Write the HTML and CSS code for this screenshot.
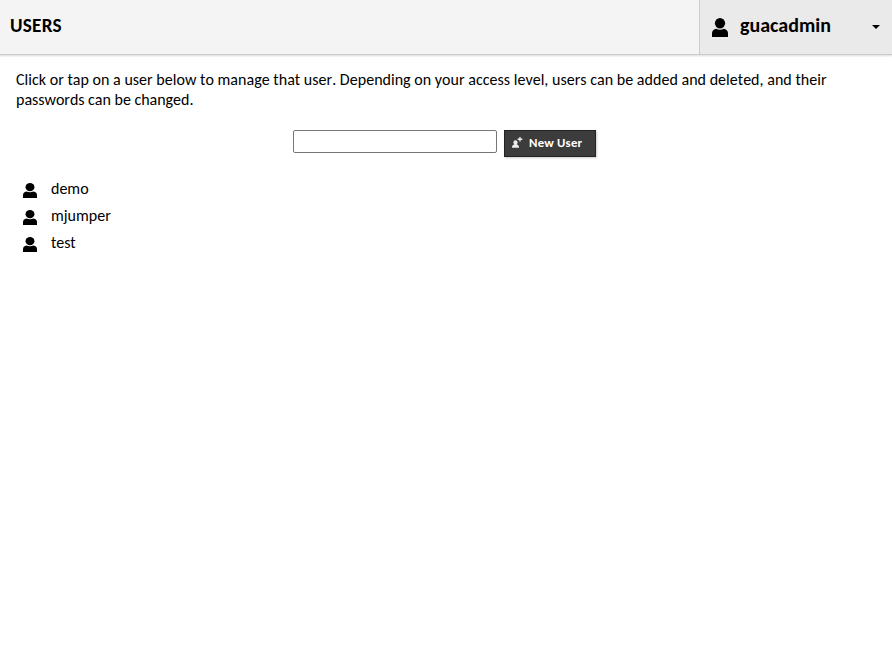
FILE: index.html
```html
<!DOCTYPE html>
<html lang="en">
<head>
<meta charset="utf-8">
<title>Users</title>
<link rel="stylesheet" href="styles.css">
</head>
<body>
<svg width="0" height="0" class="defs"><symbol id="user" viewBox="0 0 16 18.5" preserveAspectRatio="none"><circle cx="8" cy="5.1" r="5.1"/><path d="M4 10.4Q8 12.3 12 10.4Q16 11.3 16 15V18.5H0V15Q0 11.3 4 10.4Z"/></symbol></svg>
<header class="header">
  <h1>USERS</h1>
  <div class="menu"><svg class="avatar"><use href="#user"/></svg><span class="name">guacadmin</span><span class="caret"></span></div>
</header>
<main>
  <p>Click or tap on a user below to manage that user. Depending on your access level, users can be added and deleted, and their passwords can be changed.</p>
  <form class="add">
    <input type="text" aria-label="Username">
    <button type="button"><svg class="plus" viewBox="0 0 11 11"><circle cx="3.5" cy="5.4" r="2.1"/><path d="M2.3 7H4.7V7.6Q7 7.8 7 10.8H0Q0 7.8 2.3 7.6ZM7.3 0h1.3v1.6h1.7v1.3H8.6v1.7H7.3V2.9H5.6V1.6h1.7z"/></svg>New User</button>
  </form>
  <ul class="users">
    <li><svg><use href="#user"/></svg>demo</li>
    <li><svg><use href="#user"/></svg>mjumper</li>
    <li><svg><use href="#user"/></svg>test</li>
  </ul>
</main>
</body>
</html>
```
FILE: styles.css
```css
* { box-sizing: border-box; }
body { margin: 0; font-family: Carlito, Lato, sans-serif; font-size: 16px; color: #000; background: #fff; }
.defs { display: block; height: 0; }
.header { display: flex; height: 55px; background: #f4f4f4; border-bottom: 1px solid #ccc; box-shadow: 0 1px 2px rgba(0,0,0,.15); }
h1 { margin: 0; padding-left: 10px; flex: 1; font-size: 19.2px; line-height: 52px; letter-spacing: .25px; }
.menu { width: 193px; display: flex; align-items: center; padding: 0 12px; background: #eaeaea; border-left: 1px solid #ccc; font-size: 20px; font-weight: bold; line-height: 50px; }
.avatar { width: 16px; height: 19px; margin-top: 1px; }
.name { margin-left: 12px; flex: 1; height: 54px; }
.caret { border: 4px solid transparent; border-top-color: #000; border-bottom: 0; }
main { padding: 15px 16px; }
p { margin: 0; line-height: 20px; font-kerning: none; letter-spacing: -.02px; }
p::first-line { letter-spacing: .025px; }
.add { display: flex; justify-content: center; gap: 7px; margin: 20px 3px 0 0; }
input { width: 204px; height: 23px; border: 1px solid #767676; border-radius: 2px; }
button { display: flex; align-items: center; width: 92px; height: 27px; padding: 0 0 2px 7px; color: #fff; background: #3c3c3c; border: 1px solid #222; font: bold 12.8px Carlito, Lato, sans-serif; letter-spacing: .2px; white-space: nowrap; box-shadow: 1px 1px 2px rgba(0,0,0,.2); }
.plus { width: 11px; height: 11px; fill: #eee; margin-right: 6px; }
.users { list-style: none; margin: 18px 0 0; padding: 0 7px; }
li { display: flex; align-items: center; height: 27px; gap: 14px; line-height: 27px; }
li svg { width: 14px; height: 15px; margin-top: 3px; }
```
